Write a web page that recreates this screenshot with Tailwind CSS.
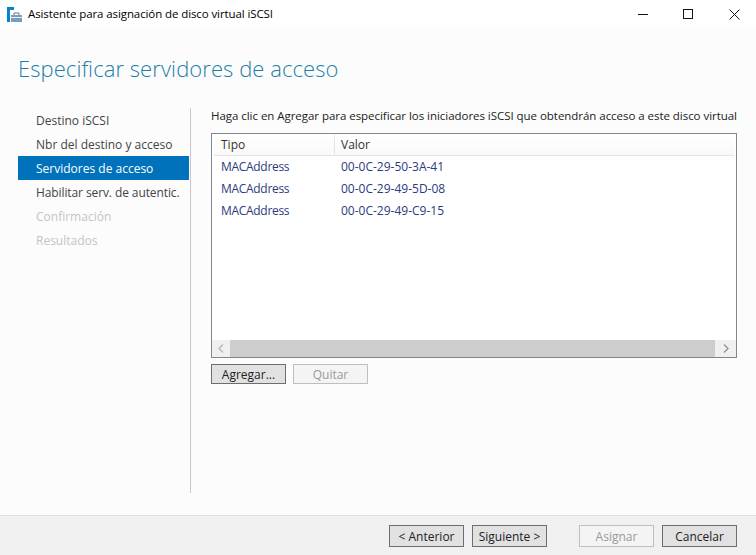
<!DOCTYPE html>
<html lang="es">
<head>
    <meta charset="UTF-8">
    <title>Asistente para asignación de disco virtual iSCSI</title>
    <script src="https://cdn.jsdelivr.net/npm/@tailwindcss/browser@4"></script>
</head>
<body class="w-[756px] h-[555px] overflow-hidden bg-[#fcfcfc] font-['Open_Sans','Noto_Sans',sans-serif] text-[12px] text-[#1a1a1a] flex flex-col">

<!-- Title bar -->
<header class="h-[28px] bg-white flex items-center shrink-0">
    <svg class="ml-[7px] mr-[6px]" width="15" height="15" viewBox="0 0 15 15">
        <rect x="0" y="0" width="7" height="3" fill="#0a7fd6"/>
        <rect x="0" y="3" width="3" height="12" fill="#0a7fd6"/>
        <path d="M4 8h11v7H4z" fill="#7d9cb5"/>
        <path d="M7 8V6h5v2" fill="none" stroke="#5b7a93" stroke-width="1"/>
        <rect x="4" y="10" width="11" height="1" fill="#e8eef3"/>
    </svg>
    <span class="text-[11.5px] text-black tracking-[-0.1px]">Asistente para asignación de disco virtual iSCSI</span>
    <div class="ml-auto flex items-center">
        <svg class="mr-[34px]" width="11" height="11" viewBox="0 0 11 11"><path d="M0 5.5h10" stroke="#111" stroke-width="1"/></svg>
        <svg class="mr-[36px]" width="10" height="10" viewBox="0 0 10 10"><rect x=".5" y=".5" width="9" height="9" fill="none" stroke="#111"/></svg>
        <svg class="mr-[16px]" width="11" height="11" viewBox="0 0 11 11"><path d="M.5.5l10 10M10.5.5l-10 10" stroke="#111" stroke-width="1"/></svg>
    </div>
</header>

<!-- Heading -->
<h1 class="h-[80px] shrink-0 pl-[18px] pt-[23px] text-[22px] leading-[34px] font-light text-[#1c7fa8] tracking-[0.07px]">Especificar servidores de acceso</h1>

<!-- Body -->
<main class="h-[407px] shrink-0 flex items-start">
    <nav class="w-[171px] ml-[18px] mr-px flex flex-col text-[12px]">
        <a class="h-[24px] pl-[18px] leading-[26px] text-[#444] whitespace-nowrap">Destino iSCSI</a>
        <a class="h-[24px] pl-[18px] leading-[26px] text-[#444] whitespace-nowrap">Nbr del destino y acceso</a>
        <a class="h-[24px] pl-[18px] leading-[26px] bg-[#0072bc] text-white whitespace-nowrap">Servidores de acceso</a>
        <a class="h-[24px] pl-[18px] leading-[26px] text-[#444] whitespace-nowrap tracking-[-0.1px]">Habilitar serv. de autentic.</a>
        <a class="h-[24px] pl-[18px] leading-[26px] text-[#c4c4c4] whitespace-nowrap">Confirmación</a>
        <a class="h-[24px] pl-[18px] leading-[26px] text-[#c4c4c4] whitespace-nowrap">Resultados</a>
    </nav>

    <div class="w-px h-[385px] bg-[#c8c8c8]"></div>

    <section class="ml-[20px] w-[526px]">
        <p class="h-[25px] leading-[16px] text-[11.5px] text-[#222] whitespace-nowrap tracking-[-0.04px]">Haga clic en Agregar para especificar los iniciadores iSCSI que obtendrán acceso a este disco virtual</p>

        <div class="h-[225px] border border-[#82878f] bg-white flex flex-col">
            <div class="h-[21px] mx-[2px] mt-px flex items-center text-[#333] border-b border-[#e4e4e4] bg-linear-to-b from-white to-[#f8f9f8]">
                <div class="w-[121px] pl-[7px] h-full leading-[20px] border-r border-[#e4e4e4]">Tipo</div>
                <div class="pl-[6px]">Valor</div>
            </div>
            <div class="flex-1 text-[#2b3a80]">
                <div class="h-[22px] flex items-center pl-[9px]"><span class="w-[120px] tracking-[-0.3px]">MACAddress</span><span>00-0C-29-50-3A-41</span></div>
                <div class="h-[22px] flex items-center pl-[9px]"><span class="w-[120px] tracking-[-0.3px]">MACAddress</span><span>00-0C-29-49-5D-08</span></div>
                <div class="h-[22px] flex items-center pl-[9px]"><span class="w-[120px] tracking-[-0.3px]">MACAddress</span><span>00-0C-29-49-C9-15</span></div>
            </div>
            <div class="h-[17px] flex items-stretch bg-[#cdcdcd]">
                <div class="w-[18px] bg-[#f0f0f0] flex items-center justify-center">
                    <svg width="6" height="9" viewBox="0 0 6 9"><path d="M5 .5l-4 4 4 4" fill="none" stroke="#b4b4b4" stroke-width="1.2"/></svg>
                </div>
                <div class="flex-1"></div>
                <div class="w-[21px] bg-[#f0f0f0] flex items-center justify-center">
                    <svg width="6" height="9" viewBox="0 0 6 9"><path d="M1 .5l4 4-4 4" fill="none" stroke="#8c8c8c" stroke-width="1.2"/></svg>
                </div>
            </div>
        </div>

        <div class="mt-[6px] flex gap-[7px]">
            <button class="w-[75px] h-[20px] leading-[17px] border border-[#6e6e6e] bg-[#e1e1e1] text-[#222]">Agregar...</button>
            <button class="w-[75px] h-[20px] leading-[17px] border border-[#bfbfbf] bg-[#f4f4f4] text-[#9a9a9a]">Quitar</button>
        </div>
    </section>
</main>

<!-- Footer -->
<footer class="flex-1 bg-[#f0f0f0] border-t border-[#dfdfdf] flex items-start justify-end pt-[9px] pr-[19px]">
    <button class="w-[75px] h-[22px] leading-[19px] border border-[#6e6e6e] bg-[#e1e1e1] text-[#222]">&lt; Anterior</button>
    <button class="ml-[8px] w-[75px] h-[22px] leading-[19px] border border-[#6e6e6e] bg-[#e1e1e1] text-[#222]">Siguiente &gt;</button>
    <button class="ml-[32px] w-[75px] h-[22px] leading-[19px] border border-[#bfbfbf] bg-[#f4f4f4] text-[#9a9a9a]">Asignar</button>
    <button class="ml-[8px] w-[75px] h-[22px] leading-[19px] border border-[#6e6e6e] bg-[#e1e1e1] text-[#222]">Cancelar</button>
</footer>

</body>
</html>
